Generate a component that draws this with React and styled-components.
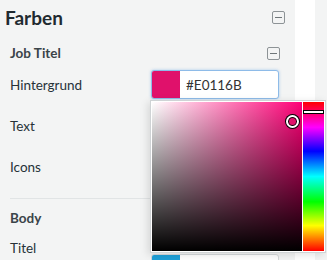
import React from "react";
import styled, { createGlobalStyle } from "styled-components";

const Global = createGlobalStyle`
  html, body {
    margin: 0;
    padding: 0;
    background: #f3f4f4;
    font-family: Lato, "Open Sans", sans-serif;
    overflow: hidden;
  }
`;

const Page = styled.div`
  display: flex;
  width: 327px;
  height: 260px;
  overflow: hidden;
`;

const Sidebar = styled.div`
  width: 295px;
  flex-shrink: 0;
  background: #f3f4f4;
  padding: 6px 10px 0 5px;
  box-sizing: border-box;
`;

const Gutter = styled.div`
  width: 20px;
  flex-shrink: 0;
  background: #ffffff;
`;

const Rest = styled.div`
  flex: 1;
  background: #f3f4f4;
`;

const Header = styled.div`
  display: flex;
  align-items: center;
  justify-content: space-between;
  height: 22px;
`;

const Title = styled.h2`
  margin: 0;
  font-size: 19px;
  font-weight: 700;
  color: #1f2a30;
`;

const Section = styled.div`
  padding: 0 5px 0 5px;
`;

const SectionHead = styled.div`
  display: flex;
  align-items: center;
  justify-content: space-between;
  height: 22px;
  margin-top: ${(p) => p.top}px;
`;

const SectionTitle = styled.div`
  font-size: 13.5px;
  font-weight: 700;
  color: #3a4449;
`;

const Toggle = styled.span`
  width: 11px;
  height: 11px;
  border: 1px solid #8d9396;
  border-radius: 2px;
  position: relative;

  &::after {
    content: "";
    position: absolute;
    left: 2px;
    right: 2px;
    top: 5px;
    height: 1px;
    background: #6f7679;
  }
`;

const Row = styled.div`
  display: flex;
  align-items: ${(p) => (p.top ? "flex-start" : "center")};
  height: ${(p) => p.h || 41}px;
`;

const Label = styled.div`
  width: 141px;
  font-size: 13.5px;
  color: #263238;
  padding-top: ${(p) => p.pt || 0}px;
`;

const Field = styled.div`
  position: relative;
  margin-top: ${(p) => p.mt || 0}px;
`;

const Input = styled.div`
  display: flex;
  align-items: center;
  width: 128px;
  height: 29px;
  box-sizing: border-box;
  border: 1px solid ${(p) => (p.focus ? "#8ebbe8" : "#d5d9db")};
  border-radius: 3px;
  background: #fff;
  box-shadow: ${(p) => (p.focus ? "0 0 3px rgba(90,160,230,0.5)" : "none")};
  overflow: hidden;
`;

const Swatch = styled.span`
  width: 28px;
  align-self: stretch;
  background: ${(p) => p.color};
`;

const Value = styled.span`
  padding-left: 6px;
  font-size: 13.5px;
  color: #333;
`;

const Divider = styled.hr`
  border: none;
  height: 1px;
  background: #e1e4e5;
  margin: 11px 0 0 5px;
  width: 140px;
`;

const Picker = styled.div`
  position: absolute;
  left: -1px;
  top: 30px;
  width: 176px;
  height: 153px;
  box-sizing: border-box;
  background: #fff;
  border: 1px solid #cfd3d5;
  padding: 1px;
  display: flex;
  gap: 1px;
  box-shadow: -2px 2px 8px rgba(0, 0, 0, 0.12);
  z-index: 5;
`;

const SatBox = styled.div`
  position: relative;
  width: 150px;
  height: 149px;
  background: linear-gradient(to top, #000, rgba(0, 0, 0, 0)),
    linear-gradient(to right, #fff, ${(p) => p.hue});
`;

const Knob = styled.span`
  position: absolute;
  left: 134px;
  top: 13px;
  width: 9px;
  height: 9px;
  border-radius: 50%;
  border: 2px solid #fff;
  box-shadow: 0 0 0 1px #000, inset 0 0 0 1px #000;
  background: #e0116b;
`;

const HueBar = styled.div`
  position: relative;
  width: 21px;
  height: 149px;
  background: linear-gradient(
    to bottom,
    #ff0000 0%,
    #ff00ff 17%,
    #0000ff 33%,
    #00ffff 50%,
    #00ff00 67%,
    #ffff00 83%,
    #ff0000 100%
  );
`;

const HueHandle = styled.span`
  position: absolute;
  left: 0;
  right: 0;
  top: 8px;
  height: 2px;
  background: #fff;
  border: 1px solid #000;
`;

const rows = [
  { label: "Hintergrund", color: "#E0116B", focus: true, picker: true },
  { label: "Text" },
  { label: "Icons" },
];

export default function App() {
  return (
    <Page>
      <Global />
      <Sidebar>
        <Header>
          <Title>Farben</Title>
          <Toggle />
        </Header>
        <Section>
          <SectionHead top={14}>
            <SectionTitle>Job Titel</SectionTitle>
            <Toggle />
          </SectionHead>
          {rows.map((r) => (
            <Row key={r.label}>
              <Label>{r.label}</Label>
              {r.color && (
                <Field>
                  <Input focus={r.focus}>
                    <Swatch color={r.color} />
                    <Value>{r.color}</Value>
                  </Input>
                  {r.picker && (
                    <Picker>
                      <SatBox hue="#ff0077">
                        <Knob />
                      </SatBox>
                      <HueBar>
                        <HueHandle />
                      </HueBar>
                    </Picker>
                  )}
                </Field>
              )}
            </Row>
          ))}
        </Section>
        <Divider />
        <Section>
          <Row h={38}>
            <SectionTitle>Body</SectionTitle>
          </Row>
          <Row h={46} top>
            <Label pt={3}>Titel</Label>
            <Field mt={17}>
              <Input>
                <Swatch color="#1FA0D8" />
                <Value>#1FA0D8</Value>
              </Input>
            </Field>
          </Row>
        </Section>
      </Sidebar>
      <Gutter />
      <Rest />
    </Page>
  );
}
